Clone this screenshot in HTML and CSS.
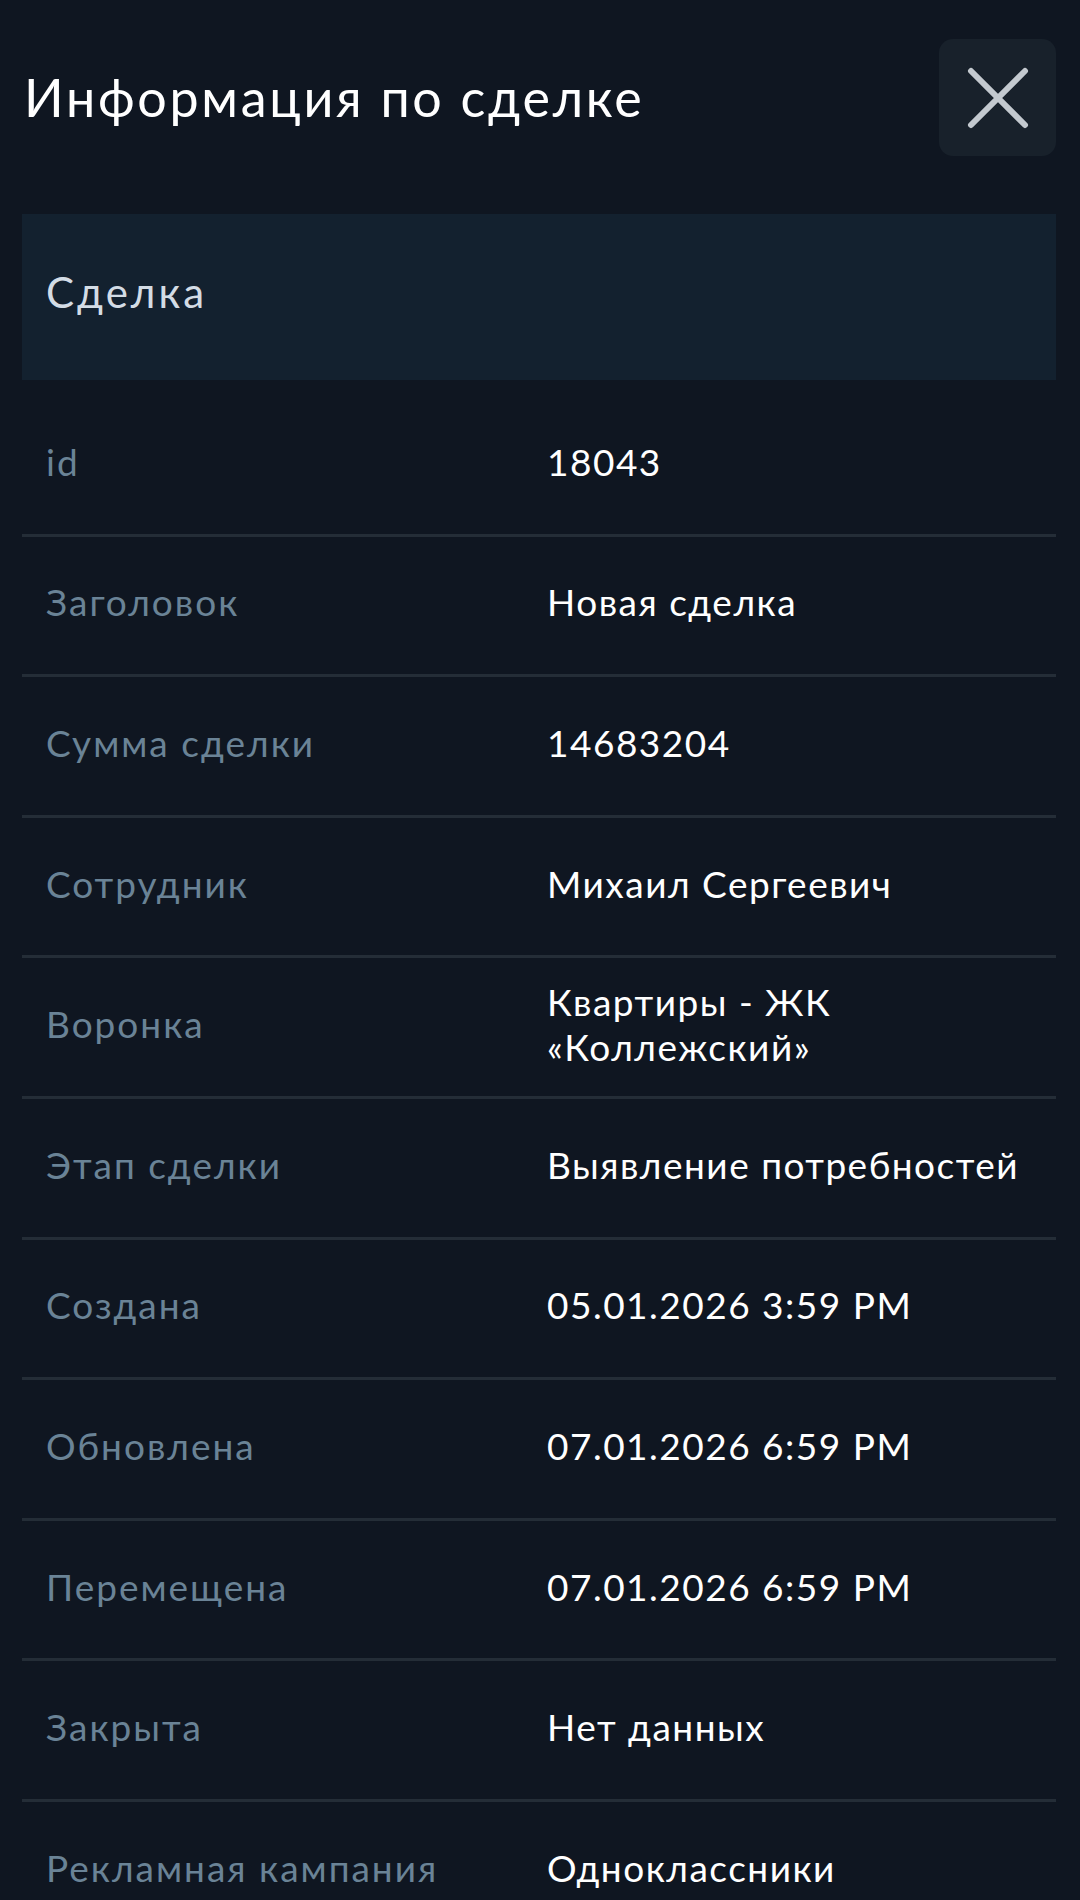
FILE: index.html
```html
<!DOCTYPE html>
<html lang="ru">
  <head>
    <meta charset="UTF-8" />
    <meta name="viewport" content="width=device-width, initial-scale=1.0" />
    <title>Информация по сделке</title>
    <link rel="stylesheet" href="styles.css">
  </head>
  <body>
    <div class="deal">
      <div class="deal__header">
        <h1 class="deal__title">Информация по сделке</h1>
        <button class="deal__close" type="button" aria-label="Закрыть">
          <svg width="62" height="62" viewBox="0 0 62 62">
            <path d="M4 4 L58 58 M58 4 L4 58" stroke="#c3c9cf" stroke-width="6" stroke-linecap="round" fill="none" />
          </svg>
        </button>
      </div>

      <div class="deal__section">Сделка</div>

      <div class="deal__list">
        <div class="deal__row">
          <span class="deal__label">id</span>
          <span class="deal__value">18043</span>
        </div>
        <div class="deal__row">
          <span class="deal__label">Заголовок</span>
          <span class="deal__value">Новая сделка</span>
        </div>
        <div class="deal__row">
          <span class="deal__label">Сумма сделки</span>
          <span class="deal__value">14683204</span>
        </div>
        <div class="deal__row">
          <span class="deal__label">Сотрудник</span>
          <span class="deal__value">Михаил Сергеевич</span>
        </div>
        <div class="deal__row">
          <span class="deal__label">Воронка</span>
          <span class="deal__value">Квартиры - ЖК «Коллежский»</span>
        </div>
        <div class="deal__row">
          <span class="deal__label">Этап сделки</span>
          <span class="deal__value">Выявление потребностей</span>
        </div>
        <div class="deal__row">
          <span class="deal__label">Создана</span>
          <span class="deal__value">05.01.2026 3:59 PM</span>
        </div>
        <div class="deal__row">
          <span class="deal__label">Обновлена</span>
          <span class="deal__value">07.01.2026 6:59 PM</span>
        </div>
        <div class="deal__row">
          <span class="deal__label">Перемещена</span>
          <span class="deal__value">07.01.2026 6:59 PM</span>
        </div>
        <div class="deal__row">
          <span class="deal__label">Закрыта</span>
          <span class="deal__value">Нет данных</span>
        </div>
        <div class="deal__row">
          <span class="deal__label">Рекламная кампания</span>
          <span class="deal__value">Одноклассники</span>
        </div>
      </div>
    </div>
  </body>
</html>
```

FILE: styles.css
```css
body {
  margin: 0;
  background: #0f1621;
  font-family: "Lato", "Noto Sans", sans-serif;
  color: #ffffff;
}

.deal {
  padding: 39px 24px 0 22px;
}

/* header with title and close button */
.deal__header {
  display: flex;
  align-items: center;
  justify-content: space-between;
  margin-bottom: 58px;
}
.deal__title {
  margin: 0 0 0 2px;
  font-size: 52px;
  font-weight: 400;
  letter-spacing: 2.7px;
  line-height: 1.2;
}
.deal__close {
  width: 117px;
  height: 117px;
  border: 0;
  padding: 0;
  border-radius: 14px;
  background: #18212b;
  display: flex;
  align-items: center;
  justify-content: center;
  cursor: pointer;
}

.deal__section {
  box-sizing: border-box;
  height: 166px;
  display: flex;
  align-items: center;
  padding: 0 0 10px 24px;
  background: #13212f;
  color: #d3dce5;
  font-size: 42px;
  letter-spacing: 3px;
}

.deal__list {
  padding-top: 16px;
}
.deal__row {
  display: grid;
  grid-template-columns: 501px 1fr;
  align-items: center;
  min-height: 130.6px;
  padding: 0 24px 7px;
  border-bottom: 3px solid #242d37;
  font-size: 37px;
  line-height: 45px;
  letter-spacing: 1.5px;
}
.deal__label {
  color: #6a8396;
  letter-spacing: 2px;
}
.deal__value {
  color: #ffffff;
}
```
